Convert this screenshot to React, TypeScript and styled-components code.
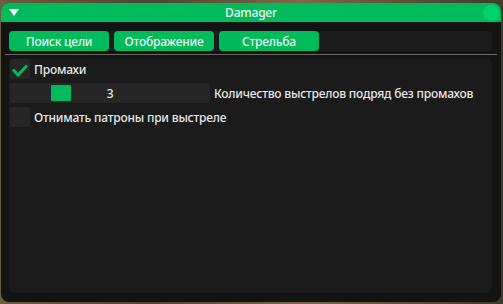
import styled, { createGlobalStyle } from 'styled-components';

const GlobalStyle = createGlobalStyle`
    html, body {
        margin: 0;
        padding: 0;
    }
    body {
        width: 503px;
        height: 304px;
        overflow: hidden;
        background: linear-gradient(90deg, #6b5e3c 0%, #4d4530 30%, #7a6a45 60%, #3f3a2a 100%);
        font-family: "Noto Sans", "Open Sans", sans-serif;
        font-size: 12px;
        font-weight: 500;
        letter-spacing: -0.2px;
        color: #ececec;
    }
`;

const green = '#00bb5b';

const Window = styled.div`
    margin: 3px 0 0 1px;
    width: 500px;
    height: 299px;
    background-color: #131313;
    border-radius: 8px;
    display: flex;
    flex-direction: column;
    overflow: hidden;
`;

const TitleBar = styled.div`
    position: relative;
    height: 19px;
    flex-shrink: 0;
    background-color: ${green};
    display: flex;
    align-items: center;
    justify-content: center;
    color: #f2f2f2;
`;

const Arrow = styled.div`
    position: absolute;
    left: 8px;
    top: 6px;
    width: 0;
    height: 0;
    border-left: 5px solid transparent;
    border-right: 5px solid transparent;
    border-top: 7px solid #ffffff;
`;

const CloseDot = styled.div`
    position: absolute;
    right: 2px;
    top: 2px;
    width: 16px;
    height: 16px;
    border-radius: 50%;
    background-color: #00d36a;
`;

const Body = styled.div`
    flex: 1;
    display: flex;
    flex-direction: column;
    padding: 9px 9px 9px 8px;
    min-height: 0;
`;

const TabBar = styled.div`
    height: 20px;
    background-color: #1b1b1b;
    border-radius: 4px;
    display: flex;
    gap: 5px;
`;

const Tab = styled.div<{ $w: number }>`
    width: ${p => p.$w}px;
    height: 20px;
    background-color: ${green};
    border-radius: 4px;
    display: flex;
    align-items: center;
    justify-content: center;
    color: #f0f0f0;
`;

const Separator = styled.div`
    height: 1px;
    background-color: #6a6a6a;
    margin: 3px -5px 3px -4px;
`;

const Panel = styled.div`
    flex: 1;
    background-color: #1b1b1b;
    border-radius: 6px;
    padding: 1px 1px;
    display: flex;
    flex-direction: column;
    gap: 4px;
`;

const Row = styled.div`
    display: flex;
    align-items: center;
    gap: 4px;
    height: 20px;
    white-space: nowrap;
`;

const Box = styled.div`
    flex-shrink: 0;
    width: 20px;
    height: 20px;
    background-color: #262626;
    border-radius: 3px;
    display: flex;
    align-items: center;
    justify-content: center;
`;

const Label = styled.span`
    color: #e8e8e8;
`;

const Slider = styled.div`
    position: relative;
    flex-shrink: 0;
    width: 200px;
    height: 20px;
    background-color: #262626;
    border-radius: 3px;
    display: flex;
    align-items: center;
    justify-content: center;
`;

const Grab = styled.div`
    position: absolute;
    left: 41px;
    top: 2px;
    width: 20px;
    height: 16px;
    background-color: ${green};
    border-radius: 1px;
`;

const Value = styled.span`
    position: relative;
    color: #e8e8e8;
`;

function Check() {
    return (
        <svg width="20" height="20" viewBox="0 0 20 20">
            <polyline points="3,10.5 8,16 17,6.5" fill="none" stroke={green} strokeWidth="3" />
        </svg>
    );
}

function App() {
    return (
        <>
            <GlobalStyle />
            <Window>
                <TitleBar>
                    <Arrow />
                    Damager
                    <CloseDot />
                </TitleBar>
                <Body>
                    <TabBar>
                        <Tab $w={100}>Поиск цели</Tab>
                        <Tab $w={100}>Отображение</Tab>
                        <Tab $w={100}>Стрельба</Tab>
                    </TabBar>
                    <Separator />
                    <Panel>
                        <Row>
                            <Box><Check /></Box>
                            <Label>Промахи</Label>
                        </Row>
                        <Row>
                            <Slider>
                                <Grab />
                                <Value>3</Value>
                            </Slider>
                            <Label>Количество выстрелов подряд без промахов</Label>
                        </Row>
                        <Row>
                            <Box />
                            <Label>Отнимать патроны при выстреле</Label>
                        </Row>
                    </Panel>
                </Body>
            </Window>
        </>
    );
}

export default App;
